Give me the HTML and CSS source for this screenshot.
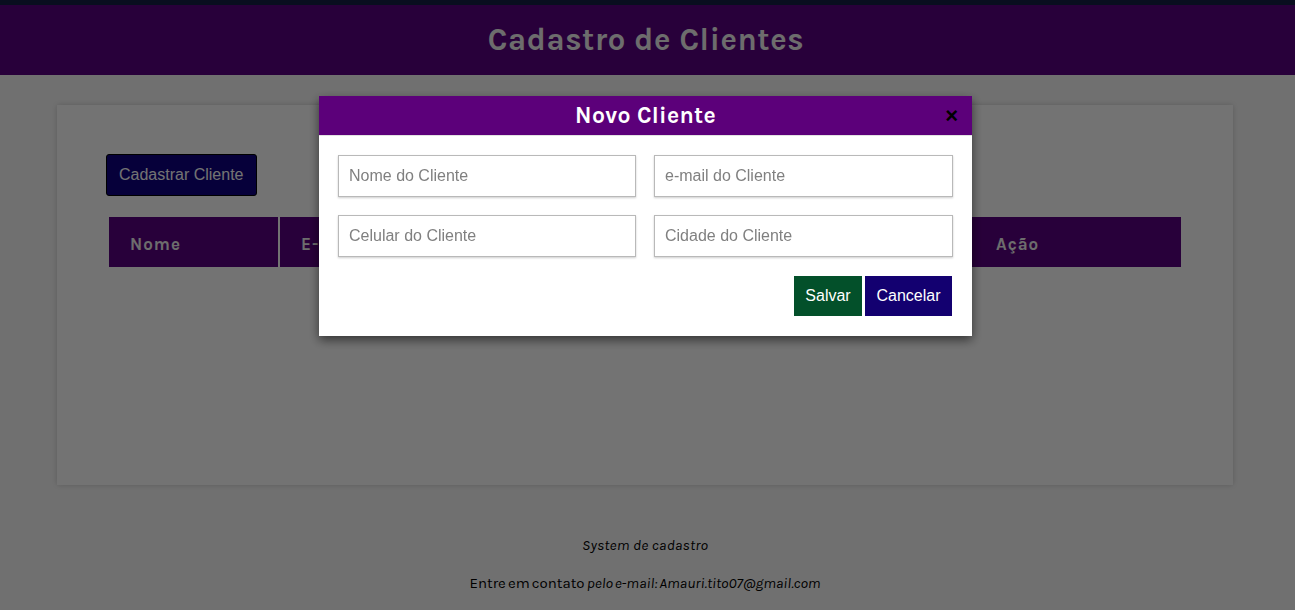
FILE: index.html
```html
<!DOCTYPE html>
<html lang="pt-BR">
<head>
<meta charset="utf-8">
<title>Cadastro de Clientes</title>
<link rel="stylesheet" href="styles.css">
</head>
<body>
<header class="topbar">
  <h1 class="title">Cadastro de Clientes</h1>
</header>
<main class="card">
  <button class="btn-new" type="button">Cadastrar Cliente</button>
  <table class="records">
    <thead>
      <tr>
        <th class="col-nome">Nome</th>
        <th class="col-email">E-mail</th>
        <th class="col-cel">Celular</th>
        <th class="col-cidade">Cidade</th>
        <th class="col-acao">Ação</th>
      </tr>
    </thead>
    <tbody></tbody>
  </table>
</main>
<footer class="footer">
  <p class="footer-line footer-brand"><em>System de cadastro</em></p>
  <p class="footer-line footer-contact">Entre em contato <em>pelo e-mail: Amauri.tito07@gmail.com</em></p>
</footer>

<div class="overlay">
  <div class="modal">
    <div class="modal-header">
      <h2 class="modal-title">Novo Cliente</h2>
      <span class="modal-close">&#215;</span>
    </div>
    <form class="modal-body">
      <div class="fields">
        <input class="field" type="text" placeholder="Nome do Cliente">
        <input class="field" type="text" placeholder="e-mail do Cliente">
        <input class="field" type="text" placeholder="Celular do Cliente">
        <input class="field" type="text" placeholder="Cidade do Cliente">
      </div>
      <div class="actions">
        <button class="btn btn-save" type="button">Salvar</button>
        <button class="btn btn-cancel" type="button">Cancelar</button>
      </div>
    </form>
  </div>
</div>
</body>
</html>
```

FILE: styles.css
```css
* { box-sizing: border-box; }

body {
  margin: 0;
  background: #f9f9f9;
  font-family: "Karla", "Lato", "Liberation Sans", sans-serif;
  color: #000;
  min-height: 610px;
}

.topbar {
  border-top: 5px solid #162145;
  background: #5a0080;
  height: 75px;
  display: flex;
  align-items: center;
  justify-content: center;
}

.title {
  margin: 0 0 0 -3px;
  color: #f2f2f2;
  font-family: "Karla", "Liberation Sans", sans-serif;
  font-weight: bold;
  font-size: 31px;
  letter-spacing: 0.6px;
}

.card {
  margin: 30px 0 0 57px;
  width: 1176px;
  height: 380px;
  background: #fff;
  box-shadow: 0 0 6px rgba(0, 0, 0, 0.18);
  padding: 49px 50px 0 49px;
}

.btn-new {
  display: block;
  height: 42px;
  padding: 0 12px;
  background: #0e0082;
  color: #fff;
  border: 1px solid #000;
  border-radius: 3px;
  font-family: "Liberation Sans", sans-serif;
  font-size: 16px;
}

.records {
  margin-top: 19px;
  margin-left: 1px;
  width: 1076px;
  border-spacing: 2px;
  table-layout: fixed;
}

.records th {
  background: #5a0080;
  color: #f2f2f2;
  height: 50px;
  text-align: left;
  padding: 3px 0 0 21px;
  font-family: "Karla", "Liberation Sans", sans-serif;
  font-size: 17px;
  font-weight: bold;
  letter-spacing: 1px;
}

.col-nome { width: 169px; }
.col-email { width: 228px; }
.col-cel { width: 228px; }
.col-cidade { width: 228px; }
.records th.col-acao { padding-left: 26px; }

.footer {
  padding: 51px 5px 0 0;
  text-align: center;
  font-size: 15px;
}

.footer-line {
  margin: 0 0 19px;
  line-height: 19px;
}

.footer-brand { letter-spacing: 0.2px; }
.footer-contact { word-spacing: -1.4px; }

.overlay {
  position: fixed;
  inset: 0;
  background: rgba(0, 0, 0, 0.55);
  display: flex;
  justify-content: center;
  align-items: flex-start;
  padding: 96px 4px 0 0;
}

.modal {
  width: 653px;
  background: #fff;
  box-shadow: 0 4px 10px rgba(0, 0, 0, 0.55);
}

.modal-header {
  position: relative;
  height: 40px;
  background: #5c007a;
  border-bottom: 1px solid #e2e2e2;
  display: flex;
  align-items: center;
  justify-content: center;
}

.modal-title {
  margin: 0;
  color: #fff;
  font-family: "Karla", "Liberation Sans", sans-serif;
  font-weight: bold;
  font-size: 23px;
  letter-spacing: 0.3px;
}

.modal-close {
  position: absolute;
  right: 14px;
  top: 8px;
  color: #000;
  font-family: "Liberation Sans", sans-serif;
  font-weight: bold;
  font-size: 22px;
  line-height: 24px;
}

.modal-body {
  padding: 19px 19px 20px 19px;
  margin: 0;
}

.fields {
  display: grid;
  grid-template-columns: 298px 299px;
  column-gap: 18px;
  row-gap: 18px;
}

.field {
  height: 42px;
  border: 1px solid #b9b9b9;
  box-shadow: 0 1px 2px rgba(0, 0, 0, 0.2);
  padding: 0 10px;
  font-family: "Liberation Sans", sans-serif;
  font-size: 16px;
  color: #333;
  background: #fff;
}

.field::placeholder { color: #808080; }

.actions {
  display: flex;
  justify-content: flex-end;
  gap: 3px;
  margin-top: 19px;
  padding-right: 1px;
}

.btn {
  height: 40px;
  border: none;
  padding: 0 10px;
  color: #fff;
  font-family: "Liberation Sans", sans-serif;
  font-size: 16px;
}

.btn-save { background: #03502a; width: 68px; }
.btn-cancel { background: #130070; width: 87px; }
```
